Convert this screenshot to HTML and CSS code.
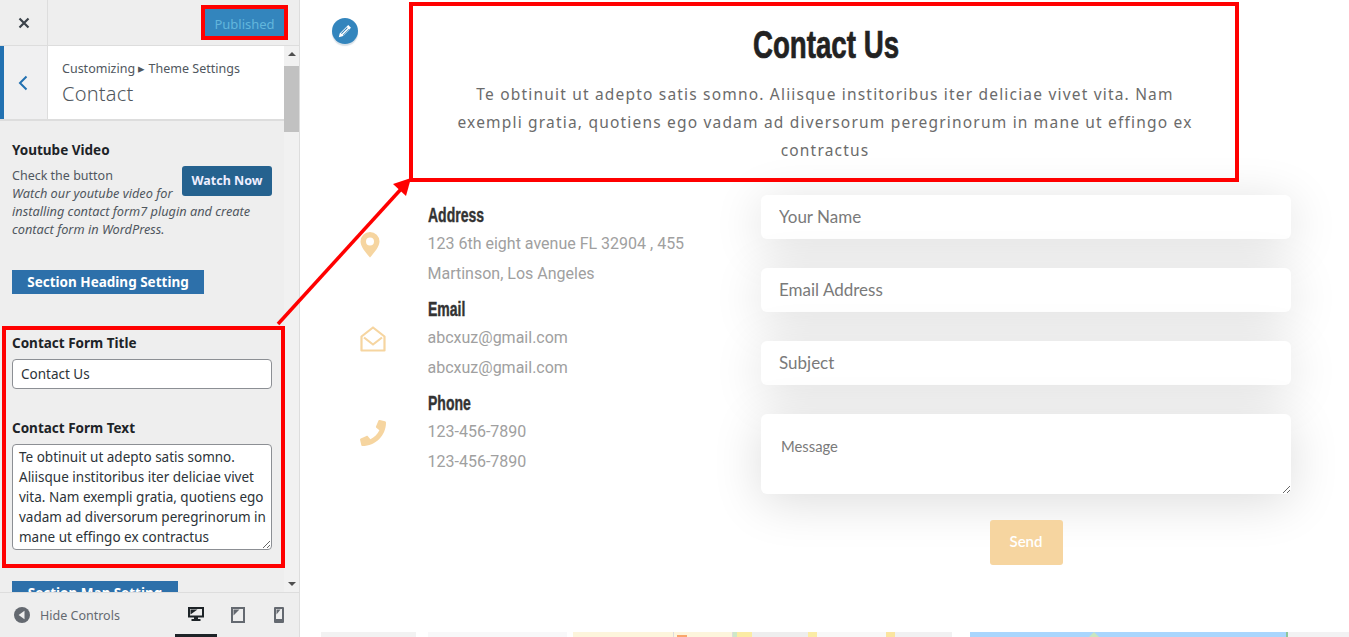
FILE: index.html
```html
<!DOCTYPE html>
<html lang="en">
<head>
<meta charset="utf-8">
<title>Contact</title>
<link rel="stylesheet" href="styles.css">
</head>
<body>
<div class="app">
  <aside class="sidebar">
    <header class="topbar">
      <div class="close"><svg width="12" height="12" viewBox="0 0 12 12"><path d="M1.500 1.500l9 9M10.500 1.500l-9 9" stroke="#3c434a" stroke-width="2.200" fill="none"/></svg></div>
      <button class="published">Published</button>
    </header>
    <div class="scrollwrap">
      <div class="panel">
        <div class="sectionhead">
          <div class="back"><svg width="10" height="16" viewBox="0 0 10 16"><path d="M8.500 1.500L2 8l6.500 6.500" stroke="#2271b1" stroke-width="2" fill="none"/></svg></div>
          <div class="crumbs">
            <div class="crumb">Customizing ▸ Theme Settings</div>
            <div class="crumbtitle">Contact</div>
          </div>
        </div>
        <div class="controls">
          <h4 class="label yt">Youtube Video</h4>
          <a class="watch">Watch Now</a>
          <div class="desc">Check the button</div>
          <div class="desc it">Watch our youtube video for installing contact form7 plugin and create contact form in WordPress.</div>
          <div class="bar barfirst">Section Heading Setting</div>
          <h4 class="label cf">Contact Form Title</h4>
          <input class="field" value="Contact Us">
          <h4 class="label ct">Contact Form Text</h4>
          <textarea class="area">Te obtinuit ut adepto satis somno. Aliisque institoribus iter deliciae vivet vita. Nam exempli gratia, quotiens ego vadam ad diversorum peregrinorum in mane ut effingo ex contractus</textarea>
          <div class="bar barmap">Section Map Setting</div>
        </div>
      </div>
      <div class="scrollbar">
        <div class="sarrow up"></div>
        <div class="strack"><div class="sthumb"></div></div>
        <div class="sarrow down"></div>
      </div>
    </div>
    <footer class="footer">
      <div class="hide"><svg width="16" height="16" viewBox="0 0 16 16"><circle cx="8" cy="8" r="8" fill="#646970"/><path d="M10.500 3.800v8.400L4.600 8z" fill="#eee"/></svg><span>Hide Controls</span></div>
      <div class="devices">
        <div class="device active"><svg width="16" height="16" viewBox="0 0 16 16"><path fill-rule="evenodd" d="M0 1h16v10.500H10v1.500h2.500v2h-9v-2H6v-1.500H0zM2 3v6.500h12V3z" fill="#1d2327"/><path d="M2.500 3.500h7l-7 5z" fill="#1d2327"/></svg></div>
        <div class="device"><svg width="14" height="16" viewBox="0 0 14 16"><path fill-rule="evenodd" d="M0 0h14v16H0zM2 2v12h10V2z" fill="#646970"/><path d="M2.500 2.500h6l-6 6z" fill="#646970"/></svg></div>
        <div class="device"><svg width="10" height="16" viewBox="0 0 10 16"><path fill-rule="evenodd" d="M1 0h8a1 1 0 0 1 1 1v14a1 1 0 0 1-1 1H1a1 1 0 0 1-1-1V1a1 1 0 0 1 1-1zM2 2v10h6V2z" fill="#646970"/><path d="M2.500 2.500h4l-4 5z" fill="#646970"/></svg></div>
      </div>
    </footer>
  </aside>
  <main class="preview">
    <section class="intro">
      <h1 class="title">Contact Us</h1>
      <p class="lead">Te obtinuit ut adepto satis somno. Aliisque institoribus iter deliciae vivet vita. Nam exempli gratia, quotiens ego vadam ad diversorum peregrinorum in mane ut effingo ex contractus</p>
    </section>
    <section class="contact">
      <div class="info">
        <div class="item">
          <svg class="ico" width="20" height="26" viewBox="0 0 20 26"><path fill-rule="evenodd" d="M10 0a9.500 9.500 0 0 1 9.500 9.500C19.500 15 13 22 10 25.500 7 22 .5 15 .5 9.500A9.500 9.500 0 0 1 10 0zm0 5.500a4 4 0 1 0 0 8 4 4 0 0 0 0-8z" fill="#f6d5a0"/></svg>
          <div class="itext"><h3 class="ihead">Address</h3><p class="iline">123 6th eight avenue FL 32904 , 455</p><p class="iline">Martinson, Los Angeles</p></div>
        </div>
        <div class="item">
          <svg class="ico" width="26" height="26" viewBox="0 0 26 26"><path d="M1.500 10.500L13 1.500l11.500 9V24.500H1.500zM4 11.500l9 7 9-7" stroke="#f6d5a0" stroke-width="2.200" fill="none" stroke-linejoin="round"/></svg>
          <div class="itext"><h3 class="ihead">Email</h3><p class="iline">abcxuz@gmail.com</p><p class="iline">abcxuz@gmail.com</p></div>
        </div>
        <div class="item">
          <svg class="ico" width="26" height="26" viewBox="0 0 512 512"><path d="M493 24l-104-24c-11-3-23 3-27 14l-48 112c-4 10-1 21 7 28l61 50c-36 77-99 140-177 177l-50-61c-7-8-18-11-28-7L15 362c-11 5-17 16-14 27l24 104c2 11 12 19 23 19 256 0 464-207 464-464 0-11-8-21-19-24z" fill="#f6d5a0"/></svg>
          <div class="itext"><h3 class="ihead">Phone</h3><p class="iline">123-456-7890</p><p class="iline">123-456-7890</p></div>
        </div>
      </div>
      <form class="form">
        <input class="inp" placeholder="Your Name">
        <input class="inp" placeholder="Email Address">
        <input class="inp" placeholder="Subject">
        <textarea class="msg" placeholder="Message"></textarea>
        <button class="send" type="button">Send</button>
      </form>
    </section>
    <div class="map">
      <i class="m m1"></i><i class="m m2"></i><i class="m m3"></i><i class="m m4"></i><i class="m m5"></i><i class="m m6"></i><i class="m m7"></i><i class="m m8"></i><i class="m m9"></i><i class="m m10"></i><i class="m m8"></i><i class="m m11"></i><i class="m m12"></i><i class="m m13"></i><i class="m m14"></i><i class="m m15"></i>
    </div>
    <div class="editbtn"><svg width="14" height="14" viewBox="0 0 14 14"><path d="M10.200 1l2.800 2.800-8.500 8.500L.8 13.200l.9-3.700zM9 3.300L3 9.300l.7.7 6-6zM10.800 5l-6 6 .7.700 6-6z" fill="#fff" fill-rule="evenodd"/></svg></div>
  </main>
</div>
<svg class="annot" width="1349" height="637" viewBox="0 0 1349 637">
  <rect x="203" y="7" width="83" height="31" fill="none" stroke="#f00" stroke-width="4"/>
  <rect x="411" y="4" width="826" height="176" fill="none" stroke="#f00" stroke-width="4"/>
  <rect x="4" y="328" width="279" height="238" fill="none" stroke="#f00" stroke-width="4"/>
  <path d="M278 324L402 188" stroke="#f00" stroke-width="3.500" fill="none"/>
  <path d="M411 178L393 184 406 196z" fill="#f00"/>
</svg>
</body>
</html>
```
FILE: styles.css
```css
* { box-sizing: border-box; }
html, body { margin: 0; height: 100%; overflow: hidden; }
body { font-family: "Noto Sans", sans-serif; background: #fff; position: relative; }
.app { display: flex; width: 1349px; height: 637px; }

.sidebar { width: 300px; flex: none; display: flex; flex-direction: column; background: #eee; border-right: 1px solid #ddd; color: #50575e; }
.topbar { height: 46px; flex: none; display: flex; align-items: center; justify-content: space-between; border-bottom: 1px solid #ddd; padding-right: 15px; }
.close { width: 48px; height: 45px; display: flex; align-items: center; justify-content: center; border-right: 1px solid #ddd; }
.published { width: 79px; height: 27px; background: #3385bd; color: #62b6dc; border: 0; font: 13px "Noto Sans", sans-serif; padding: 2px 0 0; }

.scrollwrap { flex: 1; min-height: 0; display: flex; }
.panel { flex: 1; min-width: 0; overflow: hidden; }
.sectionhead { display: flex; height: 75px; background: #fff; border-bottom: 2px solid #ddd; }
.back { width: 48px; flex: none; background: #f0f0f1; border-left: 4px solid #2271b1; border-right: 1px solid #ddd; display: flex; align-items: center; justify-content: center; padding-right: 5px; }
.crumbs { padding: 14px 0 0 14px; }
.crumb { font-size: 12.500px; line-height: 18px; }
.crumbtitle { font-size: 20px; line-height: 31px; font-weight: 300; color: #50575e; letter-spacing: .2px; }

.controls { padding: 20px 12px 0; }
.label { margin: 0; font-size: 13.500px; line-height: 18px; font-weight: 700; color: #1d2327; }
.watch { float: right; margin-top: 7px; width: 90px; height: 30px; line-height: 30px; text-align: center; background: #25628f; color: #eef; font-size: 12.500px; font-weight: 700; border-radius: 3px; }
.desc { font-size: 12.500px; line-height: 18px; color: #50575e; }
.yt + .watch + .desc { margin-top: 8px; }
.it { font-style: italic; font-size: 12.750px; margin-top: -1px; }
.bar { background: #2d70aa; color: #fff; font-size: 13.500px; font-weight: 700; height: 24px; line-height: 24px; text-align: center; }
.barfirst { width: 192px; margin-top: 32px; }
.cf { margin-top: 40px; }
.field { display: block; width: 260px; height: 30px; margin-top: 7px; padding: 0 8px; border: 1px solid #8c8f94; border-radius: 4px; background: #fff; color: #2c3338; font: 13.500px "Noto Sans", sans-serif; }
.ct { margin-top: 30px; }
.area { display: block; width: 260px; height: 106px; margin-top: 7px; padding: 2px 1px 0 6px; border: 1px solid #8c8f94; border-radius: 4px; background: #fff; color: #2c3338; font: 13.500px/20px "Noto Sans", sans-serif; overflow: hidden; }
.barmap { width: 166px; margin-top: 31px; }

.scrollbar { width: 15px; flex: none; display: flex; flex-direction: column; background: #f1f1f1; }
.sarrow { height: 17px; flex: none; position: relative; }
.sarrow::after { content: ""; position: absolute; left: 4px; border-left: 4px solid transparent; border-right: 4px solid transparent; }
.up::after { top: 6px; border-bottom: 4px solid #505050; }
.down::after { top: 7px; border-top: 4px solid #505050; }
.strack { flex: 1; }
.sthumb { height: 66px; margin-top: 3px; background: #c1c1c1; }

.footer { height: 45px; flex: none; display: flex; align-items: center; justify-content: space-between; border-top: 1px solid #ddd; }
.hide { display: flex; align-items: center; gap: 10px; padding-left: 14px; font-size: 12.500px; color: #646970; }
.devices { display: flex; height: 100%; }
.device { width: 41px; height: 100%; display: flex; align-items: center; justify-content: center; }
.device.active { width: 42px; border-bottom: 3px solid #1d2327; }

.preview { flex: 1; min-width: 0; position: relative; display: flex; flex-direction: column; background: #fff; overflow: hidden; }
.intro { margin-left: 130px; width: 790px; padding: 23px 17px 0; text-align: center; }
.title { margin: 0 0 0 2px; font: 700 39px/44px "Liberation Sans", sans-serif; color: #222; transform: scaleX(.71); -webkit-text-stroke: .7px #222; }
.lead { margin: 13px 0 0; font-size: 15.500px; line-height: 28px; letter-spacing: 1.190px; color: #6b6b6b; }

.contact { display: flex; margin-top: 31px; padding-left: 60px; }
.info { width: 401px; flex: none; padding-top: 7px; display: flex; flex-direction: column; }
.item { display: flex; height: 94px; }
.ico { flex: none; margin-top: 30px; }
.itext { margin-left: 41.500px; }
.item:first-child .itext { margin-left: 47.500px; }
.ihead { margin: 0; font: 700 20px/27px "Liberation Sans", sans-serif; color: #333; transform: scaleX(.7); transform-origin: left center; -webkit-text-stroke: .4px #333; }
.iline { margin: 0; font: 16px/30px Roboto, sans-serif; color: #a0a0a0; }

.form { width: 530px; display: flex; flex-direction: column; align-items: stretch; gap: 29px; }
.inp, .msg { border: 0; border-radius: 6px; background: #fff; box-shadow: 0 8px 50px rgba(0,0,0,.14); font-family: Lato, sans-serif; color: #7a7a7a; outline: 0; }
.inp { height: 44px; padding: 0 18px 2px; font-size: 17px; }
.msg { height: 80px; padding: 23px 20px; font-size: 14.800px; }
.inp::placeholder, .msg::placeholder { color: #7a7a7a; opacity: 1; }
.send { align-self: center; width: 73px; height: 45px; margin-top: -3px; padding: 0 0 3px; background: #f6d5a0; border: 0; border-radius: 3px; color: #fff; font: 600 15px Lato, sans-serif; }

.map { position: absolute; left: 21px; top: 632px; height: 5px; display: flex; }
.m { display: block; height: 100%; flex: none; position: relative; }
.m1 { width: 95px; background: #f2f2f2; }
.m2 { width: 12px; background: #fff; }
.m3 { width: 139px; background: #f8f8f9; }
.m4 { width: 6px; background: #fff; }
.m5 { width: 100px; background: #fdf5dc; }
.m6 { width: 60px; background: #fdf5dc; border-left: 1px solid #ddd; border-right: 1px solid #ddd; }
.m6::after { content: ""; position: absolute; left: 3px; top: 3px; width: 10px; height: 2px; background: #f9a66b; }
.m7 { width: 4px; background: #cfe8c8; }
.m8 { width: 9px; background: #fbeca5; }
.m9 { width: 6px; background: #fbeca5; }
.m10 { width: 56px; background: #eee; }
.m11 { width: 69px; background: #f8f8f8; }
.m12 { width: 9px; background: #fbe5a0; }
.m13 { width: 57px; background: #f1f1f2; }
.m14 { width: 18px; background: #fff; }
.m15 { width: 318px; background: #a9d6fd; border-right: 2px solid #8fc79b; }
.m15::before { content: ""; position: absolute; left: 119px; top: 0; border-left: 5px solid transparent; border-right: 5px solid transparent; border-bottom: 5px solid #c9e6c0; }
.m15::after { content: ""; position: absolute; left: 318px; top: 0; width: 61px; height: 5px; background: #f2f2f3; }

.editbtn { position: absolute; left: 32px; top: 18px; width: 26px; height: 26px; border-radius: 50%; background: #3385bd; display: flex; align-items: center; justify-content: center; box-shadow: 0 2px 1px rgba(100,130,160,.25), 0 0 0 1px rgba(255,255,255,.6); }

.annot { position: absolute; left: 0; top: 0; pointer-events: none; }
```
